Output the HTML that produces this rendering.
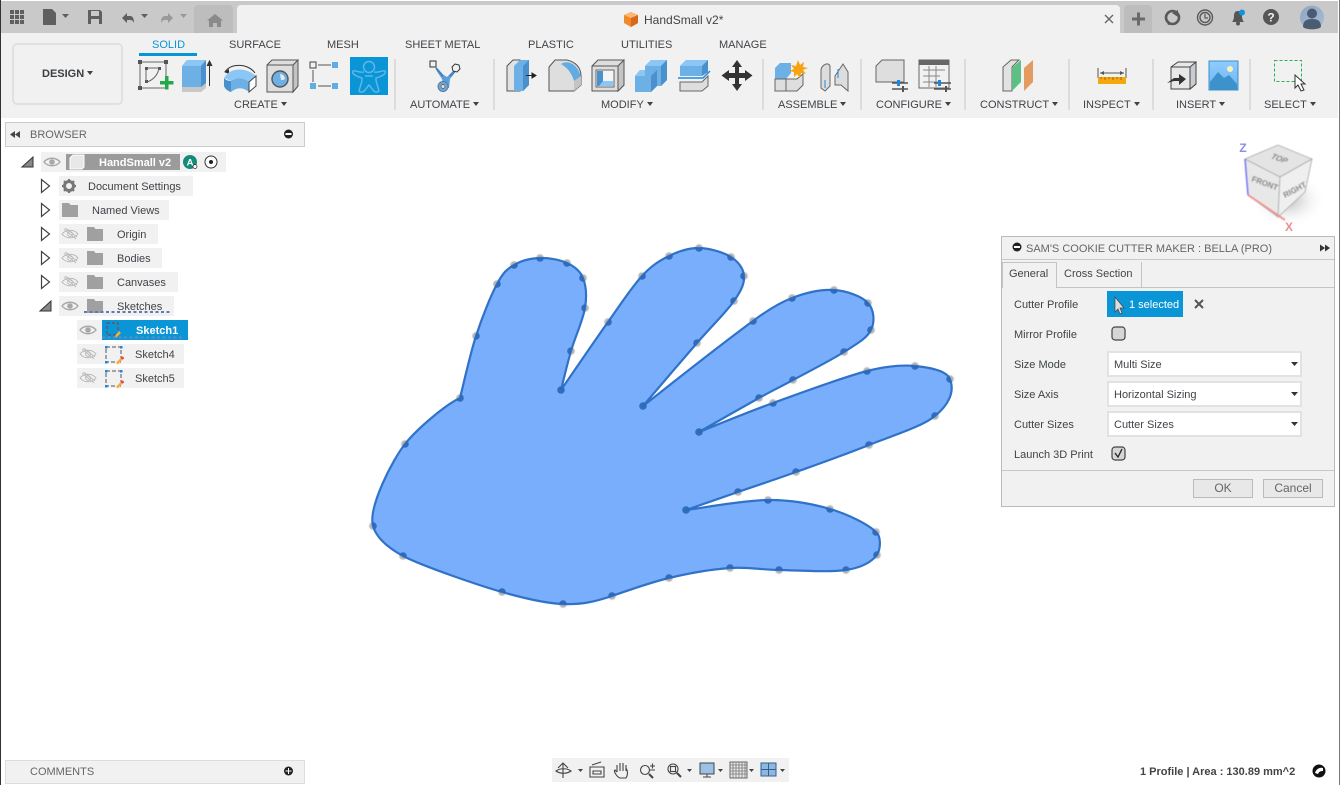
<!DOCTYPE html>
<html><head><meta charset="utf-8"><style>
html,body{margin:0;padding:0;background:#fff}
body{width:1340px;height:785px;position:relative;overflow:hidden;font-family:"Liberation Sans",sans-serif}
.b{position:absolute}
.t{position:absolute;margin-top:1px;font:11px/14px "Liberation Sans",sans-serif;white-space:nowrap;color:#3f4347}
.c::after{content:"";display:inline-block;border:3.5px solid transparent;border-top:4px solid #3f4347;border-bottom:0;margin-left:3px;vertical-align:2px}
.r{position:absolute;background:#f1f1f1;height:20px}
.dd{position:absolute;left:1107px;width:191px;height:22px;background:#fff;border:2px solid #e2e2e2}
.btn{position:absolute;top:479px;width:58px;height:17px;background:#e8e8e8;border:1px solid #bbb;font:12px/17px "Liberation Sans",sans-serif;color:#666;text-align:center}
svg{position:absolute;left:0;top:0}
#pts circle{r:3.8px}
</style></head><body>
<div class="b" style="left:0;top:1px;width:1338px;height:32px;background:#c9c9c9"></div>
<div class="b" style="left:194px;top:5px;width:39px;height:28px;background:#bdbdbd;border-radius:4px 4px 0 0"></div>
<div class="b" style="left:237px;top:5px;width:883px;height:28px;background:#f1f1f1;border-radius:4px 4px 0 0"></div>
<div class="b" style="left:1124px;top:5px;width:28px;height:28px;background:#bdbdbd;border-radius:4px 4px 0 0"></div>
<div class="b" style="left:0;top:33px;width:1338px;height:85px;background:#f1f1f1"></div>
<div class="b" style="left:0;top:0;width:1px;height:785px;background:#333"></div>
<div class="b" style="left:1339px;top:0;width:1px;height:785px;background:#777"></div>
<div class="b" style="left:12px;top:43px;width:107px;height:58px;border:2px solid #e0e0e0;border-radius:5px"></div>
<div class="t c" style="left:42px;top:66px;font-weight:bold;color:#3a3f44">DESIGN</div>
<div class="t" style="left:152px;top:37px;color:#0696d7">SOLID</div>
<div class="b" style="left:139px;top:53px;width:58px;height:3px;background:#0696d7"></div>
<div class="t" style="left:229px;top:37px">SURFACE</div>
<div class="t" style="left:327px;top:37px">MESH</div>
<div class="t" style="left:405px;top:37px">SHEET METAL</div>
<div class="t" style="left:528px;top:37px">PLASTIC</div>
<div class="t" style="left:621px;top:37px">UTILITIES</div>
<div class="t" style="left:719px;top:37px">MANAGE</div>
<div class="t c" style="left:234px;top:97px">CREATE</div>
<div class="t c" style="left:410px;top:97px">AUTOMATE</div>
<div class="t c" style="left:601px;top:97px">MODIFY</div>
<div class="t c" style="left:778px;top:97px">ASSEMBLE</div>
<div class="t c" style="left:876px;top:97px">CONFIGURE</div>
<div class="t c" style="left:980px;top:97px">CONSTRUCT</div>
<div class="t c" style="left:1083px;top:97px">INSPECT</div>
<div class="t c" style="left:1176px;top:97px">INSERT</div>
<div class="t c" style="left:1264px;top:97px">SELECT</div>
<div class="t" style="left:644px;top:12px;font-size:12px;color:#444">HandSmall v2*</div>

<div class="b" style="left:5px;top:122px;width:298px;height:23px;background:#f1f1f1;border:1px solid #ccc"></div>
<div class="t" style="left:30px;top:127px;color:#666">BROWSER</div>
<div class="r" style="left:41px;top:152px;width:185px"></div>
<div class="b" style="left:66px;top:154px;width:114px;height:16px;background:#9b9b9b"></div>
<div class="t" style="left:99px;top:155px;color:#fff;font-weight:bold">HandSmall v2</div>
<div class="r" style="left:59px;top:176px;width:134px"></div><div class="t" style="left:88px;top:179px">Document Settings</div>
<div class="r" style="left:59px;top:200px;width:110px"></div><div class="t" style="left:92px;top:203px">Named Views</div>
<div class="r" style="left:59px;top:224px;width:99px"></div><div class="t" style="left:117px;top:227px">Origin</div>
<div class="r" style="left:59px;top:248px;width:103px"></div><div class="t" style="left:117px;top:251px">Bodies</div>
<div class="r" style="left:59px;top:272px;width:119px"></div><div class="t" style="left:117px;top:275px">Canvases</div>
<div class="r" style="left:59px;top:296px;width:115px"></div><div class="t" style="left:117px;top:299px">Sketches</div>
<div class="r" style="left:77px;top:320px;width:111px"></div>
<div class="b" style="left:102px;top:320px;width:86px;height:20px;background:#0a96d6"></div>
<div class="t" style="left:136px;top:323px;color:#fff;font-weight:bold">Sketch1</div>
<div class="r" style="left:77px;top:344px;width:107px"></div><div class="t" style="left:135px;top:347px">Sketch4</div>
<div class="r" style="left:77px;top:368px;width:107px"></div><div class="t" style="left:135px;top:371px">Sketch5</div>

<div class="b" style="left:5px;top:760px;width:298px;height:22px;background:#f1f1f1;border:1px solid #ddd"></div>
<div class="t" style="left:30px;top:764px;color:#666">COMMENTS</div>
<div class="b" style="left:552px;top:758px;width:237px;height:24px;background:#f1f1f1"></div>
<div class="t" style="left:1140px;top:764px;font-weight:bold;color:#444">1 Profile | Area : 130.89 mm^2</div>

<svg width="1340" height="785" viewBox="0 0 1340 785">
<defs>
<path id="hand" d="M460 398C462.7 387.7 469.8 355 476 336C482.2 317 490.7 295.8 497 284C503.3 272.2 506.8 269.3 514 265C521.2 260.7 531.2 258.3 540 258C548.8 257.7 559.8 259.7 567 263C574.2 266.3 580 270.5 583 278C586 285.5 587 295.8 585 308C583 320.2 575 337.3 571 351C567 364.7 562.7 383.5 561 390C568.8 378.7 594.5 341 608 322C621.5 303 631.8 287 642 276C652.2 265 659.5 260.7 669 256C678.5 251.3 688.7 247.8 699 248C709.3 248.2 723.5 252.3 731 257C738.5 261.7 743.5 268.7 744 276C744.5 283.3 741.8 289.8 734 301C726.2 312.2 712.2 325.500 697 343C681.8 360.5 652 395.5 643 406C661.3 391.8 716 348 753 321C765 312 778.5 303.2 792 298C805.5 292.8 821.3 289.2 834 290C846.7 290.8 861.8 296.3 868 303C874.2 309.7 875 321.8 871 330C867 338.2 857 343.7 844 352C831 360.3 807.2 372.3 793 380C778.8 387.7 774.7 389.3 759 398C743.3 406.7 709 426.3 699 432C711.3 427.2 745 413.2 773 403C801 392.8 843.3 377.2 867 371C883 367 901.2 364.7 915 366C928.8 367.3 946.7 370.7 950 379C955 392 948.5 405 935 416C921.5 427 892 435.7 869 445C846 454.3 817.8 464.2 796 472C774.2 479.8 756.3 485.7 738 492C719.7 498.3 694.7 507 686 510C699.7 508.3 744 500.2 768 500C792 499.8 812 503.7 830 509C848 514.3 868.2 524.3 876 532C881 536 881 548 877 555C872 561.3 862.3 567.5 846 570C829.7 572.5 798.3 570.3 779 570C759.7 569.7 748.3 566.7 730 568C711.7 569.3 688.7 573.3 669 578C649.3 582.7 629.7 590 612 596C594.3 602 581.3 604.7 563 604C544.7 603.3 522 597.7 502 592C482 586.3 424.5 567 403 556C392 550 377 540 373 526C368 507 393 459 405 444C417 429 445 405 460 398Z"/>
<g id="pts">
<circle cx="460" cy="398" r="3.3"/><circle cx="476" cy="336" r="3.3"/><circle cx="497" cy="284" r="3.3"/><circle cx="514" cy="265" r="3.3"/><circle cx="540" cy="258" r="3.3"/><circle cx="567" cy="263" r="3.3"/><circle cx="583" cy="278" r="3.3"/><circle cx="585" cy="308" r="3.3"/><circle cx="571" cy="351" r="3.3"/><circle cx="561" cy="390" r="3.3"/><circle cx="608" cy="322" r="3.3"/><circle cx="642" cy="276" r="3.3"/><circle cx="669" cy="256" r="3.3"/><circle cx="699" cy="248" r="3.3"/><circle cx="731" cy="257" r="3.3"/><circle cx="744" cy="276" r="3.3"/><circle cx="734" cy="301" r="3.3"/><circle cx="697" cy="343" r="3.3"/><circle cx="643" cy="406" r="3.3"/><circle cx="753" cy="321" r="3.3"/><circle cx="792" cy="298" r="3.3"/><circle cx="834" cy="290" r="3.3"/><circle cx="868" cy="303" r="3.3"/><circle cx="871" cy="330" r="3.3"/><circle cx="844" cy="352" r="3.3"/><circle cx="793" cy="380" r="3.3"/><circle cx="759" cy="398" r="3.3"/><circle cx="699" cy="432" r="3.3"/><circle cx="773" cy="403" r="3.3"/><circle cx="867" cy="371" r="3.3"/><circle cx="915" cy="366" r="3.3"/><circle cx="950" cy="379" r="3.3"/><circle cx="935" cy="416" r="3.3"/><circle cx="869" cy="445" r="3.3"/><circle cx="796" cy="472" r="3.3"/><circle cx="738" cy="492" r="3.3"/><circle cx="686" cy="510" r="3.3"/><circle cx="768" cy="500" r="3.3"/><circle cx="830" cy="509" r="3.3"/><circle cx="876" cy="532" r="3.3"/><circle cx="877" cy="555" r="3.3"/><circle cx="846" cy="570" r="3.3"/><circle cx="779" cy="570" r="3.3"/><circle cx="730" cy="568" r="3.3"/><circle cx="669" cy="578" r="3.3"/><circle cx="612" cy="596" r="3.3"/><circle cx="563" cy="604" r="3.3"/><circle cx="502" cy="592" r="3.3"/><circle cx="403" cy="556" r="3.3"/><circle cx="373" cy="526" r="3.3"/><circle cx="405" cy="444" r="3.3"/>
</g>
<clipPath id="hc"><use href="#hand"/></clipPath>
<radialGradient id="sh"><stop offset="0" stop-color="#bbb"/><stop offset="1" stop-color="#fff" stop-opacity="0"/></radialGradient>
<linearGradient id="sky" x1="0" y1="0" x2="0" y2="1"><stop offset="0" stop-color="#8fcbff"/><stop offset="1" stop-color="#6fb5ee"/></linearGradient>
<linearGradient id="av" x1="0" y1="0" x2="1" y2="1"><stop offset="0" stop-color="#8ea6c4"/><stop offset="1" stop-color="#a9bcd2"/></linearGradient>
<g id="eye"><path d="M0 5C4 0 12 0 16 5C12 10 4 10 0 5Z" fill="none" stroke="#a8a8a8" stroke-width="1.4"/><circle cx="8" cy="5" r="2.8" fill="#a8a8a8"/></g>
<g id="eyeoff"><path d="M0 5C4 0 12 0 16 5C12 10 4 10 0 5Z" fill="none" stroke="#b8b8b8" stroke-width="1"/><circle cx="8" cy="5" r="2.4" fill="none" stroke="#b8b8b8"/><path d="M2 0L14 10M3.5 -1L15 8" stroke="#b8b8b8" stroke-width=".9"/></g>
<path id="folder" d="M0 1H7L8.5 3H16V15H0Z" fill="#a0a0a0"/>
<path id="tri" d="M0 0L8 6.5L0 13Z" fill="#fff" stroke="#444" stroke-width="1.2"/>
<g id="sk"><path d="M1 1H16V16H1Z" fill="none" stroke="#555" stroke-dasharray="4 2"/><path d="M0 0h2.500v2.500h-2.500zM15 0h2.500v2.500h-2.500zM0 15h2.500v2.500h-2.500z" fill="#1b87e0"/><path d="M11 17L16 11.500L18 13L13 18.500Z" fill="#f0b040"/><circle cx="17.500" cy="12" r="1.400" fill="#f04040"/></g>
</defs>

<!-- top bar -->
<g fill="#5f5f5f"><path d="M10 10h4v4h-4zM15 10h4v4h-4zM20 10h4v4h-4zM10 15h4v4h-4zM15 15h4v4h-4zM20 15h4v4h-4zM10 20h4v4h-4zM15 20h4v4h-4zM20 20h4v4h-4z"/>
<path d="M43 9h9l4 4v12H43z"/><path d="M62 14h7l-3.500 4z"/>
<path fill-rule="evenodd" d="M88 10h12l2 2v12H88zM91 11v5h8v-5zM91 19v5h8v-5z"/>
<path d="M141 14h7l-3.500 4z"/></g>
<path d="M122 18l5-5v3h3c3 0 4 3 4 7c-1-2-2-3-4-3h-3v3z" fill="#5f5f5f"/>
<path d="M173 18l-5-5v3h-3c-3 0-4 3-4 7c1-2 2-3 4-3h3v3z" fill="#999"/>
<path d="M180 14h7l-3.500 4z" fill="#999"/>
<path d="M215 14l8 6.500h-2V27h-4v-4h-4v4h-4v-6.500h-2z" fill="#8a8a8a"/>
<path d="M631 12l7 3v8l-7 4l-7-4v-8z" fill="#f08a28"/><path d="M624 15l7 3l7-3l-7-3z" fill="#f9b878"/><path d="M631 18v9l7-4v-8z" fill="#d8681a"/>
<path d="M1105 15l8 8M1113 15l-8 8" stroke="#666" stroke-width="1.400"/>
<path d="M1132 19h13M1138.500 12.500v13" stroke="#6a6a6a" stroke-width="3"/>
<circle cx="1172.500" cy="17.500" r="6.500" fill="none" stroke="#5a5a5a" stroke-width="2.600"/><path d="M1172 13l6-3v7zM1166 19l6 5l-4 1z" fill="#5a5a5a"/>
<circle cx="1205" cy="17.500" r="7.500" fill="none" stroke="#5a5a5a" stroke-width="1.400"/><circle cx="1205" cy="17.500" r="5" fill="none" stroke="#5a5a5a" stroke-width="1.400"/><path d="M1205 14v4h3" fill="none" stroke="#5a5a5a" stroke-width="1.200"/>
<path d="M1238 11c3 0 4 2 4 5c0 3 1 5 2 6h-12c1-1 2-3 2-6c0-3 1-5 4-5z" fill="#555"/><circle cx="1238" cy="23.500" r="2" fill="#555"/><circle cx="1242" cy="12.500" r="3" fill="#0a96e0"/>
<circle cx="1271" cy="17" r="8" fill="#555"/><text x="1271" y="21.500" font-family="Liberation Sans" font-size="12" font-weight="bold" fill="#f1f1f1" text-anchor="middle">?</text>
<circle cx="1312" cy="17.500" r="12" fill="url(#av)"/><circle cx="1312" cy="13.500" r="5" fill="#4a5c72"/><path d="M1303 27c0-6 3-8 9-8s9 2 9 8c-3 3-15 3-18 0z" fill="#4a5c72"/>

<!-- separators -->
<g fill="#dcdcdc"><rect x="394" y="59" width="2" height="51"/><rect x="493" y="59" width="2" height="51"/><rect x="762" y="59" width="2" height="51"/><rect x="860" y="59" width="2" height="51"/><rect x="964" y="59" width="2" height="51"/><rect x="1068" y="59" width="2" height="51"/><rect x="1152" y="59" width="2" height="51"/><rect x="1249" y="59" width="2" height="51"/></g>

<!-- create -->
<path d="M140 62H166V88H140Z" fill="none" stroke="#666" stroke-width="1"/>
<g fill="#555"><rect x="138" y="60" width="4" height="4"/><rect x="164" y="60" width="4" height="4"/><rect x="138" y="86" width="4" height="4"/><rect x="145" y="67" width="3" height="3"/><rect x="158" y="67" width="3" height="3"/><rect x="145" y="80" width="3" height="3"/></g>
<path d="M147 68H159M147 82C153 80 158 75 159 68M146 70V81" fill="none" stroke="#666"/>
<path d="M160 81h5v-5h3.500v5h5v3.500h-5v5h-3.500v-5h-5z" fill="#23a84a"/>
<path d="M182 66L187 60H206V86L201 92H182Z" fill="#6cb0e6"/><path d="M182 66L187 60H206L201 66Z" fill="#8cc6f4"/><path d="M201 66L206 60V86L201 92Z" fill="#4990cc"/><path d="M182 87H201L206 83V88L201 92H182Z" fill="#c8c8c8"/><path d="M209.500 86V62M207 66l2.500-5l2.500 5" stroke="#333" fill="#333"/>
<path d="M225 72C230 63 248 63 255 73" fill="none" stroke="#333"/><path d="M224 72l5-3v5z" fill="#333"/>
<path d="M224 78C230 67 246 67 256 76L249 82C243 77 237 77 231 81Z" fill="#8cc6f4"/><path d="M224 78C226 80 228 81 231 81L231 92C228 91 225 89 224 86Z" fill="#4990cc"/><path d="M231 81C237 77 243 77 249 82V92C243 87 237 87 231 92Z" fill="#6cb0e6"/><path d="M249 82L256 76V86L249 92Z" fill="#fff" stroke="#444"/>
<path d="M267 65L272 60H298V86L293 92H267Z" fill="#dedede" stroke="#555"/><path d="M293 65L298 60V86L293 92Z" fill="#c4c4c4" stroke="#555"/><path d="M267 65H293" fill="none" stroke="#555"/><circle cx="280" cy="79" r="8" fill="#6cb0e6" stroke="#555" stroke-width="1.400"/><path d="M280 74a5 5 0 0 1 5 5a5 5 0 0 1-4 1z" fill="#e8e8e8"/>
<path d="M318 65H331M313 70V82M318 86H331" stroke="#555"/><rect x="310" y="62" width="6" height="6" fill="#f1f1f1" stroke="#444"/><rect x="332" y="62" width="6" height="6" fill="#62ace4"/><rect x="310" y="83" width="6" height="6" fill="#62ace4"/><rect x="332" y="83" width="6" height="6" fill="#62ace4"/>
<rect x="350" y="57" width="38" height="38" fill="#0a96d6"/>
<g fill="none" stroke="#62b8e8" stroke-width="1.400"><circle cx="369" cy="67" r="5.500"/><path d="M364 72C360 73 355 70 353 71C351 74 358 77 362 78C362 81 362 82 361 84L359 91C361 93 364 92 365 90L369 85L373 90C374 92 377 93 379 91L377 84C376 82 376 81 376 78C380 77 387 74 385 71C383 70 378 73 374 72"/><path d="M365 76H373"/></g>
<!-- automate -->
<path d="M436 70L442 79L444 88L449 88L450 79L457 70L452 72L447 77L442 74Z" fill="#5b9fd8"/><path d="M436 68L443 76M457 69L450 76" stroke="#4680b8" stroke-width="2"/><rect x="430" y="61" width="6" height="6" fill="#f1f1f1" stroke="#333"/><path d="M455 64l4 1l1 4l-3 3l-4-1l-1-4z" fill="#f1f1f1" stroke="#333"/><circle cx="443" cy="86.500" r="5" fill="#7aa5c8" stroke="#4680b8"/><circle cx="443" cy="86.500" r="2" fill="#ddd" stroke="#555" stroke-width=".7"/>

<!-- modify -->
<path d="M507 66L513 60H520V91H507Z" fill="#e2e2e2" stroke="#555"/><path d="M514 66L520 60H529V85L523 91H514Z" fill="#6cb0e6"/><path d="M523 66L529 60V85L523 91Z" fill="#4990cc"/><path d="M526 75.500H534M532 73l4 2.500l-4 2.500z" stroke="#222" fill="#222"/>
<path d="M549 67L555 60H567C576 62 581 68 581 76V85L574 91H549Z" fill="#dedede" stroke="#555"/><path d="M561 64C566 60 578 62 581 78L574 81C572 74 568 68 561 64Z" fill="#62ace4"/><path d="M574 81L581 76V85L574 91Z" fill="#c4c4c4"/>
<path d="M592 66L598 60H624V85L618 91H592Z" fill="#dedede" stroke="#555"/><path d="M618 66L624 60V85L618 91Z" fill="#c4c4c4" stroke="#555"/><path d="M592 66H618" fill="none" stroke="#555"/><rect x="596" y="70" width="18" height="17" fill="#f4f4f4" stroke="#666"/><path d="M597 71h6v10h10v5h-16z" fill="#4990cc"/><path d="M603 81h10v5h-14z" fill="#8cc6f4"/>
<path d="M645 66L651 60H667V80L661 86H645Z" fill="#6cb0e6"/><path d="M645 66L651 60H667L661 66Z" fill="#8cc6f4"/><path d="M661 66L667 60V80L661 86Z" fill="#4990cc"/>
<path d="M635 76L640 70H657V86L651 92H635Z" fill="#6cb0e6"/><path d="M651 76L657 70V86L651 92Z" fill="#4990cc"/><path d="M635 76L640 70H645V76Z" fill="#8cc6f4"/>
<path d="M680 66L686 60H708V72L702 76H680Z" fill="#6cb0e6"/><path d="M680 66L686 60H708L702 66Z" fill="#8cc6f4"/><path d="M702 66L708 60V72L702 76Z" fill="#4990cc"/><path d="M680 82H702L708 76V86L702 91H680Z" fill="#dedede" stroke="#666"/><path d="M678 78H703L710 71" fill="none" stroke="#1b87e0" stroke-width="1.400"/>
<path d="M737 60l5 7h-3v6h6v-3l7.500 5.500l-7.500 5.500v-3h-6v6h3l-5 7l-5-7h3v-6h-6v3l-7.500-5.500l7.500-5.500v3h6v-6h-3z" fill="#333"/>

<!-- assemble -->
<path d="M775 68L780 63H791V73L786 79H775Z" fill="#6cb0e6"/><path d="M775 79H786V91H775Z" fill="#dedede" stroke="#666"/><path d="M786 79H797L803 74V85L797 91H786Z" fill="#dedede" stroke="#666"/>
<path d="M798 60l2 5l4-3l-1 5l5 1l-5 2l3 4l-5-1l-1 5l-3-4l-3 3v-5l-5-1l5-2l-3-4l5 1z" fill="#f5a310"/>
<path d="M821 70C822 64 829 62 830 66V86L825 91L821 88Z" fill="#ddd" stroke="#666"/><path d="M835 76L843 64L848 72V91L841 85H835Z" fill="#ddd" stroke="#666"/><path d="M825 80V88M838 69V78" stroke="#1b87e0"/>

<!-- configure -->
<path d="M876 66L882 60H904V82H876Z" fill="#dedede" stroke="#666"/><path d="M892 83H908M892 89H908" stroke="#555" stroke-width="1.500"/><rect x="897" y="80" width="3" height="6" fill="#1b87e0"/><rect x="902" y="86" width="2" height="6" fill="#555"/>
<rect x="919" y="60" width="30" height="28" fill="#f1f1f1" stroke="#666"/><rect x="919" y="60" width="30" height="5" fill="#666"/><path d="M923 70H945M923 76H940M923 82H938M929 66V87M936 66V87" stroke="#888" fill="none"/><path d="M934 83H951M934 89H951" stroke="#555" stroke-width="1.500"/><rect x="938" y="80" width="3" height="6" fill="#1b87e0"/><rect x="945" y="86" width="2" height="6" fill="#555"/>

<!-- construct -->
<path d="M1003 67L1011 60H1019L1012 67V91H1003Z" fill="#e2e2e2" stroke="#666"/><path d="M1012 68L1021 60V82L1012 91Z" fill="#5cc084"/><path d="M1024 68L1033 60V82L1024 91Z" fill="#e59a62"/>

<!-- inspect -->
<path d="M1098 68V78M1126 68V78" stroke="#555"/><path d="M1100 73H1124" stroke="#555"/><path d="M1100 73l4-2v4zM1124 73l-4-2v4z" fill="#555"/><rect x="1098" y="77" width="28" height="7" fill="#f5a70f"/><path d="M1101 77v2M1105 77v3M1109 77v2M1113 77v3M1117 77v2M1121 77v3" stroke="#8a5a00" stroke-width=".8"/>

<!-- insert -->
<path d="M1171 67L1178 62H1196V84L1190 89H1171Z" fill="#e8e8e8" stroke="#444"/><path d="M1190 67L1196 62V84L1190 89Z" fill="#c8ccd0" stroke="#444"/><path d="M1171 67H1190" fill="none" stroke="#444"/><path d="M1167 83L1174 78H1179V74L1186 79L1179 85V81H1174Z" fill="#333"/>
<rect x="1209" y="61" width="29" height="29" fill="url(#sky)" stroke="#3d8fc8"/><circle cx="1230" cy="69" r="3" fill="#f7f3b8"/><path d="M1210 82L1218 72L1224 78L1229 75L1237 84V90H1210Z" fill="#3e92cc"/>

<!-- select -->
<rect x="1274.500" y="60.500" width="27" height="21" fill="none" stroke="#2ab157" stroke-dasharray="3 2"/>
<path d="M1295 75V88L1298 85L1301 91L1304 90L1301 84H1305Z" fill="#fff" stroke="#333"/>

<!-- browser icons -->
<path d="M10 134.500l5-3.500v7zM15 134.500l5-3.500v7z" fill="#444"/>
<circle cx="288.500" cy="134" r="4.500" fill="#222"/><rect x="285.500" y="133" width="6" height="2" fill="#fff"/>
<path d="M22 167L33 157V167Z" fill="#888" stroke="#333"/>
<use href="#eye" x="44" y="157"/>
<path d="M70 158L73 155H84V167L82 169H70Z" fill="#e8e8e8" stroke="#fff"/>
<circle cx="190" cy="162" r="7" fill="#148c7a"/><text x="190" y="165.500" font-family="Liberation Sans" font-size="9.500" font-weight="bold" fill="#fff" text-anchor="middle">A</text><circle cx="195" cy="166.500" r="2" fill="#fff" stroke="#222" stroke-width=".7"/>
<circle cx="211" cy="162" r="6" fill="#fff" stroke="#333"/><circle cx="211" cy="162" r="2" fill="#222"/>
<use href="#tri" x="41.500" y="179.500"/><use href="#tri" x="41.500" y="203.500"/><use href="#tri" x="41.500" y="227.500"/><use href="#tri" x="41.500" y="251.500"/><use href="#tri" x="41.500" y="275.500"/>
<path d="M40 311L51 301V311Z" fill="#888" stroke="#333"/>
<circle cx="69" cy="186" r="4.500" fill="none" stroke="#777" stroke-width="3"/><path d="M69 179v3M69 190v3M62 186h3M73 186h3M64 181l2 2M72 189l2 2M64 191l2-2M72 183l2-2" stroke="#777" stroke-width="2.200"/>
<use href="#folder" x="62" y="202"/>
<use href="#eyeoff" x="62" y="229"/><use href="#folder" x="87" y="226"/>
<use href="#eyeoff" x="62" y="253"/><use href="#folder" x="87" y="250"/>
<use href="#eyeoff" x="62" y="277"/><use href="#folder" x="87" y="274"/>
<use href="#eye" x="62" y="301"/><use href="#folder" x="87" y="298"/>
<path d="M84 312H172" stroke="#5c7cb8" stroke-width="2" stroke-dasharray="3 2.500"/>
<use href="#eye" x="80" y="325"/>
<path d="M107 323H118V335H107Z" fill="none" stroke="#8a3a2a" stroke-dasharray="3 2"/><path d="M114 337L119 331L121 333L116 338Z" fill="#f0b040"/>
<path d="M102 337.500H184" stroke="#5c8cc0" stroke-width="2" stroke-dasharray="3 2.500"/>
<use href="#eyeoff" x="80" y="349"/><use href="#sk" x="105" y="346"/>
<use href="#eyeoff" x="80" y="373"/><use href="#sk" x="105" y="370"/>

<!-- hand -->
<g fill="#a0a0a0" opacity=".8" style="filter:blur(.5px)"><use href="#pts"/></g>
<use href="#hand" fill="#79aefc"/>
<use href="#hand" fill="none" stroke="#2f72c8" stroke-width="2.200"/>
<g clip-path="url(#hc)" fill="#2a66b6" opacity=".9"><use href="#pts"/></g>

<!-- viewcube -->
<ellipse cx="1288" cy="200" rx="38" ry="28" fill="url(#sh)"/>
<g style="filter:blur(.4px)">
<path d="M1245 159L1278 145L1312 159L1280 177Z" fill="#e4e4e4" stroke="#aaa" stroke-width=".8"/>
<path d="M1245 159L1280 177L1278 217L1248 195Z" fill="#e8e8e8" stroke="#aaa" stroke-width=".8"/>
<path d="M1280 177L1312 159L1305 192L1278 217Z" fill="#efefef" stroke="#aaa" stroke-width=".8"/>
<path d="M1245 159L1248 195" stroke="#7d7df0" stroke-width="1.600"/>
<path d="M1248 195L1285 220" stroke="#ee8f8f" stroke-width="1.800"/>
<g font-family="Liberation Sans" font-size="8" fill="#8a8a8a" font-weight="bold">
<text transform="translate(1270,158) rotate(20) skewX(-20)">TOP</text>
<text transform="translate(1251,181) rotate(20)">FRONT</text>
<text transform="translate(1285,198) rotate(-28)">RIGHT</text></g></g>
<text x="1243" y="152" font-family="Liberation Sans" font-size="12" font-weight="bold" fill="#8b8bf0" text-anchor="middle">Z</text>
<text x="1289" y="231" font-family="Liberation Sans" font-size="12" font-weight="bold" fill="#ee8f8f" text-anchor="middle">X</text>

<!-- bottom -->
<g stroke="#444" fill="none" stroke-width="1.100"><path d="M563 763V778M558 768L563 763L568 768M556 771C560 768 567 768 571 771C567 774 560 774 556 771Z"/>
<path d="M590 767H604V777H590ZM593 771H601V774H593ZM592 765L601 762"/>
<path d="M617 772V765M620 771V763M623 771V763M626 771V765M617 772L615 770C613 771 617 777 620 778H626C628 775 628 771 626 768"/>
<circle cx="645" cy="770" r="4.500"/><path d="M649 774L653 778" stroke-width="2"/><path d="M650 766h5M652.500 763.500v5M650 770h5"/>
<circle cx="673" cy="769" r="5"/><rect x="670.500" y="766.500" width="5" height="5"/><path d="M677 773L681 777" stroke-width="2"/></g>
<g fill="#444"><path d="M578 769h5l-2.500 3zM687 769h5l-2.500 3zM718 769h5l-2.500 3zM749 769h5l-2.500 3zM780 769h5l-2.500 3z"/></g>
<rect x="700" y="763" width="14" height="11" fill="#9bc2e6" stroke="#444"/><path d="M703 777H711M707 774V777" stroke="#444"/>
<rect x="730" y="762" width="17" height="16" fill="#e8e8e8" stroke="#666"/><path d="M733 762V778M736 762V778M739 762V778M742 762V778M745 762V778M730 765H747M730 768H747M730 771H747M730 774H747" stroke="#777" stroke-width=".8"/>
<rect x="761" y="763" width="15" height="13" fill="#8db8e2" stroke="#335f8f"/><path d="M761 769.500H776M768.500 763V776" stroke="#335f8f"/>
<circle cx="288.500" cy="771" r="4.500" fill="#222"/><path d="M285.500 771H291.500M288.500 768V774" stroke="#fff"/>
<circle cx="1319" cy="771" r="6.500" fill="#111"/><path d="M1315 773C1316 769 1320 767 1323 768L1323 771C1320 771 1319 772 1318 774Z" fill="#fff"/>
</svg>

<!-- panel -->
<div class="b" style="left:1001px;top:236px;width:332px;height:269px;background:#f1f1f1;border:1px solid #bbb"></div>
<div class="b" style="left:1002px;top:259px;width:332px;height:1px;background:#c8c8c8"></div>
<div class="b" style="left:1002px;top:287px;width:332px;height:1px;background:#c4c4c4"></div>
<div class="b" style="left:1002px;top:262px;width:55px;height:26px;background:#f1f1f1;border-top:1px solid #c4c4c4;border-left:1px solid #c4c4c4;border-right:1px solid #c4c4c4;box-sizing:border-box"></div>
<div class="b" style="left:1141px;top:262px;width:1px;height:25px;background:#c4c4c4"></div>
<div class="b" style="left:1002px;top:470px;width:332px;height:1px;background:#c8c8c8"></div>
<div class="t" style="left:1026px;top:241px;color:#666">SAM'S COOKIE CUTTER MAKER : BELLA (PRO)</div>
<div class="t" style="left:1009px;top:266px;color:#444">General</div>
<div class="t" style="left:1064px;top:266px;color:#444">Cross Section</div>
<div class="t" style="left:1014px;top:297px">Cutter Profile</div>
<div class="t" style="left:1014px;top:327px">Mirror Profile</div>
<div class="t" style="left:1014px;top:357px">Size Mode</div>
<div class="t" style="left:1014px;top:387px">Size Axis</div>
<div class="t" style="left:1014px;top:417px">Cutter Sizes</div>
<div class="t" style="left:1014px;top:447px">Launch 3D Print</div>
<div class="b" style="left:1107px;top:291px;width:76px;height:26px;background:#0a96d6"></div>
<div class="t" style="left:1129px;top:297px;color:#fff">1 selected</div>
<div class="dd" style="top:351px"></div><div class="t" style="left:1114px;top:357px">Multi Size</div>
<div class="dd" style="top:381px"></div><div class="t" style="left:1114px;top:387px">Horizontal Sizing</div>
<div class="dd" style="top:411px"></div><div class="t" style="left:1114px;top:417px">Cutter Sizes</div>
<div class="btn" style="left:1193px">OK</div>
<div class="btn" style="left:1263px">Cancel</div>
<svg width="1340" height="785" viewBox="0 0 1340 785" style="pointer-events:none">
<circle cx="1017" cy="247" r="4.500" fill="#222"/><rect x="1014" y="246" width="6" height="2" fill="#fff"/>
<path d="M1320 244.500l5 3.500l-5 3.500zM1325 244.500l5 3.500l-5 3.500z" fill="#333"/>
<path d="M1115 297V312L1118 309L1120 314L1122 313L1120 308H1124Z" fill="#ddd" stroke="#444" stroke-width=".7"/>
<path d="M1195 300l8 8M1203 300l-8 8" stroke="#555" stroke-width="2"/>
<rect x="1112" y="327" width="13" height="13" rx="3" fill="#d6d6d6" stroke="#444" stroke-width="1.200"/>
<rect x="1112" y="447" width="13" height="13" rx="3" fill="#d6d6d6" stroke="#444" stroke-width="1.200"/><path d="M1115 453L1118 457L1122 449" fill="none" stroke="#222" stroke-width="1.300"/>
<path d="M1291 362h7l-3.500 4zM1291 392h7l-3.500 4zM1291 422h7l-3.500 4z" fill="#333"/>
</svg>
</body></html>
